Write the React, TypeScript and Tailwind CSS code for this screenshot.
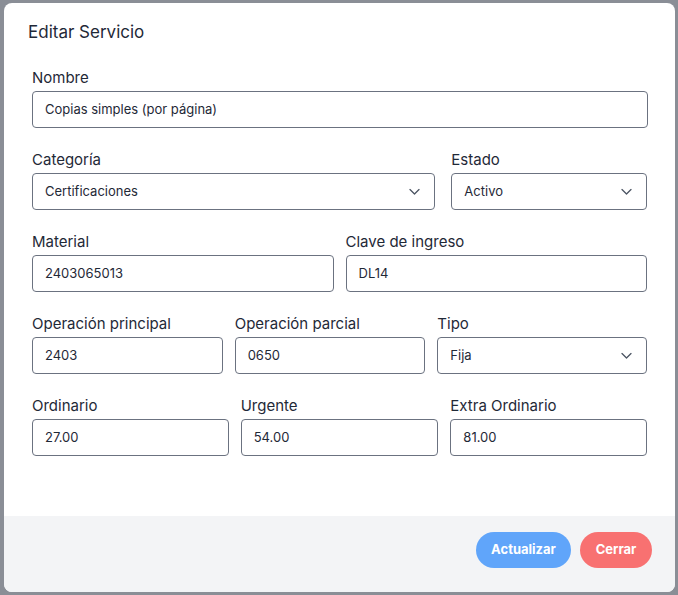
import React from "react";

const font = { fontFamily: "Inter, 'Noto Sans', sans-serif" };

function Chevron() {
  return (
    <svg width="11" height="7" viewBox="0 0 11 7" className="absolute right-[14px] top-1/2 -translate-y-1/2">
      <polyline points="1,1 5.5,5.5 10,1" fill="none" stroke="#4b5563" strokeWidth="1.3" strokeLinecap="round" strokeLinejoin="round" />
    </svg>
  );
}

function Field({ label, value, w, select }: { label: string; value: string; w: string; select?: boolean }) {
  return (
    <div className={`flex flex-col gap-[3px] ${w}`}>
      <div className="text-[15px] leading-[20px] text-[#1f2937]">{label}</div>
      <div className="relative h-[37px] rounded-[4px] border border-[#6b7280] bg-white flex items-center pl-[12px]">
        <span className="text-[13px] text-[#1f2937]">{value}</span>
        {select && <Chevron />}
      </div>
    </div>
  );
}

export default function App() {
  return (
    <div className="w-[678px] h-[595px] bg-[#8a8e96] pt-[3px] pl-[4px] overflow-hidden" style={font}>
      <div className="w-[671px] h-[589px] bg-white rounded-[8px] overflow-hidden flex flex-col">
        <div className="flex-1 pt-[17px]">
          <div className="pl-[24px] text-[17px] leading-[24px] text-[#1f2937]">Editar Servicio</div>
          <div className="px-[28px] pt-[24px] flex flex-col gap-[22px]">
            <Field label="Nombre" value="Copias simples (por página)" w="w-[616px]" />
            <div className="flex gap-[16px]">
              <Field label="Categoría" value="Certificaciones" w="w-[404px]" select />
              <Field label="Estado" value="Activo" w="w-[196px]" select />
            </div>
            <div className="flex gap-[12px]">
              <Field label="Material" value="2403065013" w="w-[302px]" />
              <Field label="Clave de ingreso" value="DL14" w="w-[302px]" />
            </div>
            <div className="flex gap-[12px]">
              <Field label="Operación principal" value="2403" w="w-[191px]" />
              <Field label="Operación parcial" value="0650" w="w-[191px]" />
              <Field label="Tipo" value="Fija" w="w-[210px]" select />
            </div>
            <div className="flex gap-[12px]">
              <Field label="Ordinario" value="27.00" w="w-[197px]" />
              <Field label="Urgente" value="54.00" w="w-[198px]" />
              <Field label="Extra Ordinario" value="81.00" w="w-[197px]" />
            </div>
          </div>
        </div>
        <div className="h-[76px] bg-[#f3f4f6] flex justify-end items-start pt-[16px] pr-[23px] gap-[9px]">
          <button className="h-[36px] w-[95px] rounded-full bg-[#60a5fa] text-white text-[13px] font-bold">Actualizar</button>
          <button className="h-[36px] w-[72px] rounded-full bg-[#f87171] text-white text-[13px] font-bold">Cerrar</button>
        </div>
      </div>
    </div>
  );
}
